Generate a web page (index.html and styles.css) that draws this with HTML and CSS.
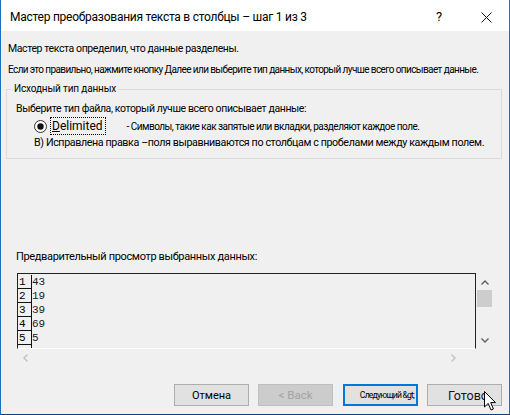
FILE: index.html
```html
<!DOCTYPE html>
<html lang="ru">
<head>
<meta charset="utf-8">
<link rel="stylesheet" href="styles.css">
</head>
<body>
<div class="window">
  <div class="titlebar">
    <span class="title">Мастер преобразования текста в столбцы – шаг 1 из 3</span>
    <span class="help">?</span>
    <svg class="close" width="11" height="11" viewBox="0 0 11 11"><path d="M0.5 0.5 L10.5 10.5 M10.5 0.5 L0.5 10.5" stroke="#111" stroke-width="1" fill="none"/></svg>
  </div>
  <div class="content">
    <p class="intro">Мастер текста определил, что данные разделены.</p>
    <p class="hint">Если это правильно, нажмите кнопку Далее или выберите тип данных, который лучше всего описывает данные.</p>
    <fieldset class="group">
      <legend class="legend">Исходный тип данных</legend>
      <p class="choose">Выберите тип файла, который лучше всего описывает данные:</p>
      <div class="option">
        <svg class="radio" width="13" height="13" viewBox="0 0 13 13"><circle cx="6.5" cy="6.5" r="6" fill="#fff" stroke="#333" stroke-width="1"/><circle cx="6.5" cy="6.5" r="3.2" fill="#111"/></svg>
        <span class="focus"><u>D</u>elimited</span>
        <span class="desc">- Символы, такие как запятые или вкладки, разделяют каждое поле.</span>
      </div>
      <p class="fixed">В) Исправлена правка –поля выравниваются по столбцам с пробелами между каждым полем.</p>
    </fieldset>
    <p class="preview-label">Предварительный просмотр выбранных данных:</p>
    <div class="preview">
      <div class="preview-main">
        <div class="grid">
          <div class="row"><span class="num">1</span><span class="val">43</span></div>
          <div class="row"><span class="num">2</span><span class="val">19</span></div>
          <div class="row"><span class="num">3</span><span class="val">39</span></div>
          <div class="row"><span class="num">4</span><span class="val">69</span></div>
          <div class="row"><span class="num">5</span><span class="val">5</span></div>
          <div class="row"><span class="num"></span><span class="val"></span></div>
        </div>
        <div class="vscroll">
          <svg class="arrow" width="8" height="5" viewBox="0 0 8 5"><path d="M0.5 4.5 L4 1 L7.5 4.5" stroke="#606060" stroke-width="1.4" fill="none"/></svg>
          <div class="thumb"></div>
          <svg class="arrow arrow-down" width="8" height="5" viewBox="0 0 8 5"><path d="M0.5 0.5 L4 4 L7.5 0.5" stroke="#606060" stroke-width="1.4" fill="none"/></svg>
        </div>
      </div>
      <div class="hscroll">
        <svg width="5" height="8" viewBox="0 0 5 8"><path d="M4.5 0.5 L1 4 L4.5 7.5" stroke="#c2c2c2" stroke-width="1.4" fill="none"/></svg>
        <svg width="5" height="8" viewBox="0 0 5 8"><path d="M0.5 0.5 L4 4 L0.5 7.5" stroke="#c2c2c2" stroke-width="1.4" fill="none"/></svg>
      </div>
    </div>
    <div class="buttons">
      <button class="btn">Отмена</button>
      <button class="btn btn-disabled">&lt; Back</button>
      <button class="btn btn-default">Следующий &amp;gt;</button>
      <button class="btn btn-finish">Готово</button>
    </div>
  </div>
  <svg class="cursor" width="14" height="21" viewBox="0 0 14 21"><path d="M0.5 0.5 L0.5 16 L4.2 12.4 L7 19 L9.4 18 L6.7 11.6 L11.5 11.6 Z" fill="#fff" stroke="#000" stroke-width="1"/></svg>
</div>
</body>
</html>
```
FILE: styles.css
```css
* { box-sizing: border-box; }
html, body { margin: 0; padding: 0; background: #fff; }
body { font-family: Roboto, "Noto Sans", "Liberation Sans", sans-serif; color: #000; }

.window {
  position: relative;
  width: 510px;
  height: 415px;
  background: #f0f0f0;
  border: 1px solid #1c6fc0;
  border-top: none;
  border-bottom-color: #0e3f78;
  display: flex;
  flex-direction: column;
}

.titlebar {
  height: 31px;
  background: #fff;
  display: flex;
  align-items: center;
  padding-left: 9px;
}
.title { font-size: 12px; letter-spacing: -0.25px; flex: 1; padding-top: 3px; white-space: nowrap; }
.help { font-size: 13px; width: 10px; margin-right: 35px; padding-top: 2px; }
.close { margin-right: 17px; margin-top: 3px; }

.content { padding: 0 7px 0 5px; display: flex; flex-direction: column; }

p { margin: 0; white-space: nowrap; }

.intro { font-size: 10.5px; letter-spacing: -0.4px; line-height: 16px; margin: 10px 0 0 2px; }
.hint { font-size: 10px; letter-spacing: -0.6px; line-height: 16px; margin: 5px 0 0 2px; }

.group {
  margin: 5px 0 0 0;
  padding: 0 0 7px 0;
  border: 1px solid #dcdcdc;
  min-width: 0;
}
.legend { font-size: 10px; line-height: 12px; margin-left: 5px; padding: 0 2px; letter-spacing: -0.15px; }
.choose { font-size: 10.5px; letter-spacing: -0.38px; line-height: 16px; margin: 6px 0 0 9px; }
.option { display: flex; align-items: center; height: 18px; margin-left: 27px; }
.radio { display: block; }
.focus {
  font-size: 12px; line-height: 16px; font-weight: 400;
  border: 1px dotted #000; padding: 0 2px 0 1px; margin-left: 3px;
}
.focus u { text-decoration-thickness: 1px; }
.desc { font-size: 10px; margin-left: 21px; letter-spacing: -0.51px; }
.fixed { font-size: 10.7px; letter-spacing: -0.38px; line-height: 16px; margin: 0 0 0 27px; }

.preview-label { font-size: 11px; letter-spacing: -0.35px; line-height: 16px; margin: 90px 0 0 10px; }

.preview { margin: 8px 0 0 11px; width: 476px; }
.preview-main { display: flex; height: 76px; }
.grid {
  width: 459px;
  border: 1px solid #222;
  border-bottom-color: #fff;
  padding-top: 1px;
  overflow: hidden;
}
.row { display: flex; height: 14px; }
.num {
  width: 14px; height: 14px;
  border-right: 1px solid #111; border-bottom: 1px solid #111;
  font-family: "Liberation Mono", monospace; font-size: 11px; line-height: 13px;
  padding-left: 1px; padding-top: 1px;
}
.val { font-family: "Liberation Mono", monospace; font-size: 11px; line-height: 13px; padding-top: 1px; color: #222; }

.vscroll { width: 17px; display: flex; flex-direction: column; align-items: center; }
.arrow { margin-top: 7px; display: block; }
.thumb { width: 15px; height: 17px; background: #cdcdcd; margin-top: 5px; }
.arrow-down { margin-top: auto; margin-bottom: 6px; }

.hscroll { height: 17px; display: flex; justify-content: space-between; align-items: center; padding: 0 20px 0 6px; width: 459px; }
.hscroll svg { display: block; }

.buttons { display: flex; justify-content: flex-end; gap: 9px; margin-top: 18px; }
.btn {
  width: 75px; height: 22px;
  background: #e1e1e1; border: 1px solid #adadad;
  font-family: Roboto, "Noto Sans", sans-serif;
  font-size: 11px; color: #000; padding: 0; margin: 0;
  white-space: nowrap;
}
.btn-disabled { background: #cccccc; border-color: #bfbfbf; color: #a3a3a3; font-size: 11.5px; }
.btn-default { border: 2px solid #0078d7; margin-left: 1px; font-size: 8.6px; letter-spacing: -0.8px; text-align: right; padding-right: 2px; overflow: visible; }
.btn-finish { font-size: 12.5px; color: #1a1020; padding-left: 7px; }

.cursor { position: absolute; left: 483px; top: 391px; }
```
